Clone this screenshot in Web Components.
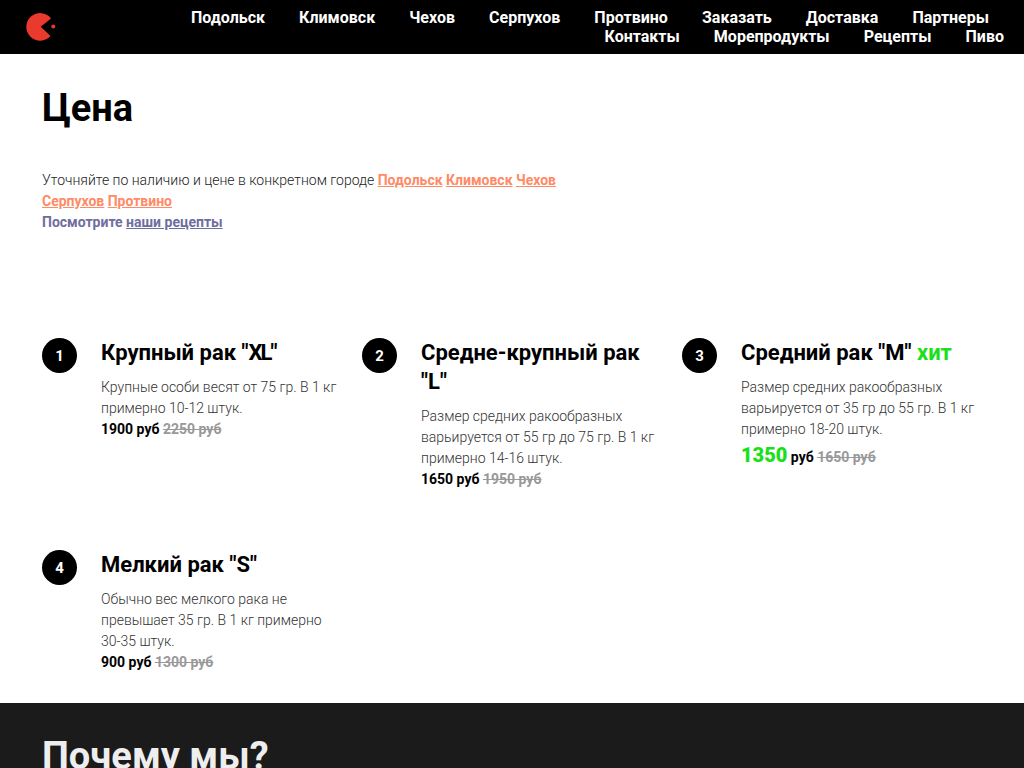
<!DOCTYPE html>
<html lang="ru">
<head>
<meta charset="utf-8">
<title>Цена</title>
<style>
  html, body { margin: 0; padding: 0; height: 768px; overflow: hidden; background: #fff; }
  body { font-family: Roboto, "Liberation Sans", sans-serif; color: #000; }
  price-intro a { color: #ff8a65; font-weight: 700; text-decoration: underline; }
</style>
</head>
<body>
<site-header>
  <nav-link>Подольск</nav-link><nav-link>Климовск</nav-link><nav-link>Чехов</nav-link><nav-link>Серпухов</nav-link><nav-link>Протвино</nav-link><nav-link>Заказать</nav-link><nav-link>Доставка</nav-link><nav-link>Партнеры</nav-link>
  <nav-link slot="second">Контакты</nav-link><nav-link slot="second">Морепродукты</nav-link><nav-link slot="second">Рецепты</nav-link><nav-link slot="second">Пиво</nav-link>
</site-header>

<price-intro heading="Цена">
  <span slot="cities">Уточняйте по наличию и цене в конкретном городе <a>Подольск</a> <a>Климовск</a> <a>Чехов</a><br><a>Серпухов</a> <a>Протвино</a></span>
</price-intro>

<price-grid>
  <price-card num="1" title="Крупный рак &quot;<span class='tight'>XL</span>&quot;" price="1900 руб" old="2250 руб">Крупные особи весят от 75 гр. В 1 кг примерно 10-12 штук.</price-card>
  <price-card num="2" title="Средне-крупный рак &quot;L&quot;" price="1650 руб" old="1950 руб">Размер средних ракообразных варьируется от 55 гр до 75 гр. В 1 кг примерно 14-16 штук.</price-card>
  <price-card num="3" title="Средний рак &quot;M&quot;" hit="1350" price="руб" old="1650 руб">Размер средних ракообразных варьируется от 35 гр до 55 гр. В 1 кг примерно 18-20 штук.</price-card>
  <price-card num="4" title="Мелкий рак &quot;S&quot;" price="900 руб" old="1300 руб">Обычно вес мелкого рака не превышает 35 гр. В 1 кг примерно 30-35 штук.</price-card>
</price-grid>

<why-us>Почему мы?</why-us>

<script>
// header with logo and two rows of links
class SiteHeader extends HTMLElement {
  constructor() {
    super();
    this.attachShadow({ mode: 'open' });
  }

  connectedCallback() {
    this.shadowRoot.innerHTML = `
      <style>
        :host { display: flex; justify-content: space-between; height: 54px; background: #000; padding: 8px 20px 0 26px; box-sizing: border-box; }
        svg { display: block; margin-top: 4px; }
        nav { display: flex; flex-direction: column; align-items: flex-end; }
        .row { display: flex; gap: 34.12px; }
        .first { padding-right: 15px; }
      </style>
      <svg width="30" height="30" viewBox="0 0 30 30">
        <path d="M25 6.4 A13.8 13.8 0 1 0 24.5 24 L14.7 14.7 Z" fill="#ea3a2d"/>
        <circle cx="27.3" cy="14.4" r="2" fill="#ea3a2d"/>
      </svg>
      <nav>
        <div class="row first"><slot></slot></div>
        <div class="row"><slot name="second"></slot></div>
      </nav>
    `;
  }
}

class NavLink extends HTMLElement {
  constructor() {
    super();
    this.attachShadow({ mode: 'open' });
  }

  connectedCallback() {
    this.shadowRoot.innerHTML = `
      <style>
        :host { display: block; color: #fff; font: 700 16px/19px Roboto, "Liberation Sans", sans-serif; white-space: nowrap; }
      </style>
      <slot></slot>
    `;
  }
}

class PriceIntro extends HTMLElement {
  constructor() {
    super();
    this.attachShadow({ mode: 'open' });
  }

  connectedCallback() {
    const heading = this.getAttribute('heading') || '';
    this.shadowRoot.innerHTML = `
      <style>
        :host { display: block; padding: 33px 42px 0; height: 284px; box-sizing: border-box; }
        h1 { margin: 0 0 41px; font: 700 38px/42px Roboto, "Liberation Sans", sans-serif; color: #000; }
        p { margin: 0; font: 300 14px/21px Roboto, "Liberation Sans", sans-serif; color: #222; }
        ::slotted(span) { display: block; }
        .recipes { font-weight: 700; color: #6e6e9e; }
        .recipes a { text-decoration: underline; }
      </style>
      <h1>${heading}</h1>
      <p><slot name="cities"></slot></p>
      <p class="recipes">Посмотрите <a>наши рецепты</a></p>
    `;
  }
}

class PriceGrid extends HTMLElement {
  constructor() {
    super();
    this.attachShadow({ mode: 'open' });
  }

  connectedCallback() {
    this.shadowRoot.innerHTML = `
      <style>
        :host { display: grid; grid-template-columns: repeat(3, 320px); row-gap: 60px; padding: 0 0 0 42px; height: 365px; box-sizing: border-box; align-content: start; }
      </style>
      <slot></slot>
    `;
  }
}

class PriceCard extends HTMLElement {
  static observedAttributes = ['num', 'title', 'hit', 'price', 'old'];

  constructor() {
    super();
    this.attachShadow({ mode: 'open' });
  }

  connectedCallback() {
    this.render();
  }

  attributeChangedCallback(name, oldValue, newValue) {
    if (oldValue !== newValue) {
      this.render();
    }
  }

  render() {
    const num = this.getAttribute('num') || '';
    const title = this.getAttribute('title') || '';
    const hit = this.getAttribute('hit');
    const price = this.getAttribute('price') || '';
    const old = this.getAttribute('old') || '';

    this.shadowRoot.innerHTML = `
      <style>
        :host { display: flex; gap: 24px; align-items: flex-start; font-family: Roboto, "Liberation Sans", sans-serif; }
        .num { flex: none; width: 35px; height: 35px; border-radius: 50%; background: #000; color: #fff; font-weight: 700; font-size: 15px; display: flex; align-items: center; justify-content: center; }
        .body { width: 240px; }
        h3 { margin: 0 0 10px; font: 700 22px/29px Roboto, "Liberation Sans", sans-serif; color: #000; }
        h3 span { color: #1ae01a; font-weight: 700; }
        h3 .tight { color: inherit; letter-spacing: -2px; }
        .text { font-weight: 300; font-size: 14px; line-height: 21px; color: #333; }
        .price { font-weight: 700; font-size: 14px; line-height: 21px; color: #000; }
        .price.big { line-height: 31px; }
        .price b { color: #1ae01a; font-size: 20px; }
        .price s { color: #999; }
      </style>
      <div class="num">${num}</div>
      <div class="body">
        <h3>${title}${hit ? ' <span>хит</span>' : ''}</h3>
        <div class="text"><slot></slot></div>
        <div class="price${hit ? ' big' : ''}">${hit ? `<b>${hit}</b> ` : ''}${price} <s>${old}</s></div>
      </div>
    `;
  }
}

class WhyUs extends HTMLElement {
  constructor() {
    super();
    this.attachShadow({ mode: 'open' });
  }

  connectedCallback() {
    this.shadowRoot.innerHTML = `
      <style>
        :host { display: block; height: 65px; overflow: hidden; background: #1b1b1b; color: #eee; padding: 32px 42px 0; box-sizing: border-box; font: 700 38px/42px Roboto, "Liberation Sans", sans-serif; }
      </style>
      <slot></slot>
    `;
  }
}

customElements.define('site-header', SiteHeader);
customElements.define('nav-link', NavLink);
customElements.define('price-intro', PriceIntro);
customElements.define('price-grid', PriceGrid);
customElements.define('price-card', PriceCard);
customElements.define('why-us', WhyUs);
</script>
</body>
</html>
